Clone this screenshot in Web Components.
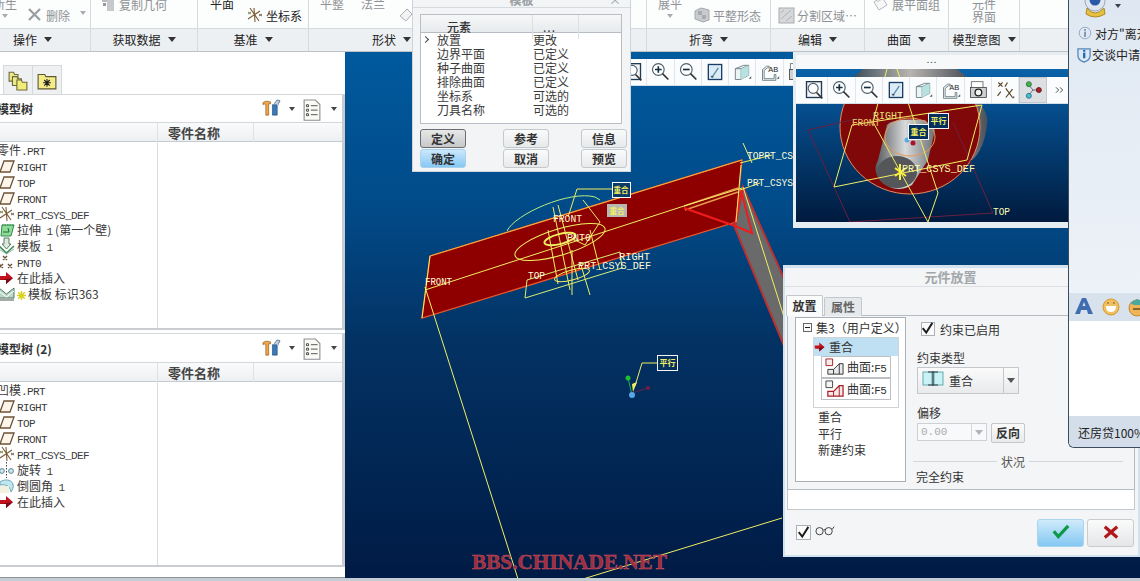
<!DOCTYPE html>
<html lang="zh">
<head>
<meta charset="utf-8">
<title>Pro/E</title>
<style>
  html, body { margin: 0; padding: 0; width: 1140px; height: 581px; overflow: hidden; background: #c9ced4; }
  body { font: 12px "Noto Sans CJK SC", "Liberation Sans", sans-serif; color: #333; }
</style>
</head>
<body>
<cad-app>
  <ribbon-bar slot="ribbon">
    <ribbon-group label="操作" w="91" pad="13">
      <rb-item stack caret muted style="margin:-3px 0 0 -7px">新生</rb-item>
      <rb-item icon="del" muted style="margin:7px 0 0 10px">删除</rb-item>
      <rb-item caret-side muted style="margin:7px 0 0 0"></rb-item>
    </ribbon-group>
    <ribbon-group label="获取数据" w="107">
      <rb-item icon="copygeom" muted style="margin:-4px 0 0 9px">复制几何</rb-item>
    </ribbon-group>
    <ribbon-group label="基准" w="111">
      <rb-item style="margin:-3px 0 0 12px">平面</rb-item>
      <rb-item icon="csys" style="margin:7px 0 0 13px">坐标系</rb-item>
    </ribbon-group>
    <ribbon-group label="形状" w="338" pad="63">
      <rb-item muted style="margin:-3px 0 0 11px">平整</rb-item>
      <rb-item muted style="margin:-3px 0 0 17px">法兰</rb-item>
      <rb-item icon="wedge" muted style="margin:7px 0 0 13px"></rb-item>
    </ribbon-group>
    <ribbon-group label="折弯" w="124">
      <rb-item stack caret muted style="margin:-3px 0 0 11px">展平</rb-item>
      <rb-item icon="flat" muted style="margin:7px 0 0 12px">平整形态</rb-item>
    </ribbon-group>
    <ribbon-group label="编辑" w="94">
      <rb-item icon="split" muted style="margin:7px 0 0 7px">分割区域…</rb-item>
    </ribbon-group>
    <ribbon-group label="曲面" w="84">
      <rb-item icon="unfold" muted style="margin:-4px 0 0 8px">展平面组</rb-item>
    </ribbon-group>
    <ribbon-group label="模型意图" w="71">
      <rb-item stack muted style="margin:-3px 0 0 23px">元件<br>界面</rb-item>
    </ribbon-group>
    <ribbon-group w="120"></ribbon-group>
  </ribbon-bar>

  <model-sidebar slot="side">
    <tree-panel label="模型树" head="28" h="236">
      <tree-row root>零件<span>.PRT</span></tree-row>
      <tree-row icon="plane"><span>RIGHT</span></tree-row>
      <tree-row icon="plane"><span>TOP</span></tree-row>
      <tree-row icon="plane"><span>FRONT</span></tree-row>
      <tree-row icon="csys"><span>PRT_CSYS_DEF</span></tree-row>
      <tree-row icon="extrude">拉伸  <span>1</span> (第一个壁)</tree-row>
      <tree-row icon="template">模板  <span>1</span></tree-row>
      <tree-row icon="pnt"><span>PNT0</span></tree-row>
      <tree-row icon="arrow">在此插入</tree-row>
      <tree-row icon="template2"><cad-icon name="star" size="9"></cad-icon>模板 标识363</tree-row>
    </tree-panel>
    <tree-panel label="模型树 (2)" head="29" h="234">
      <tree-row root>凹模<span>.PRT</span></tree-row>
      <tree-row icon="plane"><span>RIGHT</span></tree-row>
      <tree-row icon="plane"><span>TOP</span></tree-row>
      <tree-row icon="plane"><span>FRONT</span></tree-row>
      <tree-row icon="csys"><span>PRT_CSYS_DEF</span></tree-row>
      <tree-row icon="revolve">旋转  <span>1</span></tree-row>
      <tree-row icon="round">倒圆角  <span>1</span></tree-row>
      <tree-row icon="arrow">在此插入</tree-row>
    </tree-panel>
  </model-sidebar>

  <cad-viewport slot="view">
    <view-toolbar style="left:286px;top:7px;width:164px" items="fit,zoomin,zoomout,repaint,box,ab,camera" first="-11"></view-toolbar>
  </cad-viewport>

  <template-dialog slot="win"></template-dialog>
  <mini-view slot="win"></mini-view>
  <placement-dialog slot="win"></placement-dialog>
  <chat-window slot="win"></chat-window>
</cad-app>

<script>
const ICONS = {
  del: '<path d="M2 2L13 13M13 2L2 13" stroke="#9a9ea2" stroke-width="2.2" fill="none"/>',
  copygeom: '<rect x="2" y="1" width="6" height="5" fill="#b8bcc0"/><rect x="7" y="4" width="7" height="11" fill="#c6c9cc"/><rect x="3" y="7" width="3" height="3" fill="#999"/>',
  csys: '<path d="M3 1L12 14M1 12L13 4M7 1L8 15" stroke="#7a5a34" stroke-width="1.1" fill="none"/><path d="M12 7l3 2M15 7l-3 2" stroke="#7a6a50" stroke-width="1"/><path d="M1 5l3 2M4 5L1 7" stroke="#8a8a50"/>',
  wedge: '<path d="M2 9L9 2L14 7L8 14Z" fill="#f4f4f4" stroke="#aab0b6"/><path d="M2 9L8 14" stroke="#c4c8cc"/>',
  flat: '<path d="M1 4L7 1L15 3V13L9 15L1 12Z" fill="#c9cccf" stroke="#a4a8ac"/><path d="M4 4h4v4H4zM8 8h4v4H8z" fill="#a8acb0"/>',
  split: '<rect x="1" y="1" width="15" height="15" fill="#d6d8da" stroke="#a8acb0"/><path d="M3 12L13 3M3 6l3-3M8 14l6-5" stroke="#aeb2b6"/>',
  unfold: '<path d="M1 6L9 1L14 9L6 14Z" fill="#f8f8f8" stroke="#b4b8bc"/><path d="M4 6L9 3" stroke="#c4c8cc"/>',
  plane: '<path d="M1 14L5 3H15L11 14Z" fill="#fdf5ea" stroke="#6e5236" stroke-width="1.3"/>',
  extrude: '<path d="M3 3H15L12 14H2Z" fill="#8fdc9a" stroke="#2f8a46"/><path d="M3 3H15" stroke="#2f8a46" stroke-dasharray="1.5 1"/><path d="M4 10H10L9 6" stroke="#1f6a36" fill="none"/>',
  template: '<path d="M5 0V6H3L7.5 11L12 6H10V0Z" fill="#dfe8df" stroke="#5a7a62"/><path d="M0 8L7.5 15L15 8" fill="none" stroke="#3c8a56" stroke-width="1.6"/><path d="M0 11L7.5 16L15 11" fill="none" stroke="#8fb89c"/>',
  pnt: '<path d="M4 2l4 4M8 2L4 6M0 10l4 4M4 10L0 14M9 10l4 4M13 10l-4 4" stroke="#6b5236" stroke-width="1.4"/>',
  arrow: '<path d="M1 6H7V2L14 8L7 14V10H1Z" fill="#c4101c"/><path d="M1 10H7V14L14 8" fill="#7c0a12"/>',
  template2: '<path d="M0 2L7.5 8L15 2V12H0Z" fill="#b9d6c6" stroke="#4e7a60"/><path d="M0 12H15V15H0Z" fill="#a4aaa6"/><path d="M0 5L7.5 11L15 5" stroke="#fff" fill="none"/>',
  star: '<path d="M4.5 0V9M0 4.5H9M1.2 1.2L7.8 7.8M7.8 1.2L1.2 7.8" stroke="#d8d21c" stroke-width="1.4"/>',
  revolve: '<path d="M7.5 0V16" stroke="#444" stroke-dasharray="1.5 1.5"/><circle cx="3" cy="9" r="2.4" fill="#cfe6ee" stroke="#5a8898"/><circle cx="12" cy="9" r="2.4" fill="#cfe6ee" stroke="#5a8898"/>',
  round: '<path d="M1 4C5 1 12 1 14 6C15 10 13 12 12 14C11 8 7 6 1 7Z" fill="#bfe6ee" stroke="#6aa8b8"/><path d="M0 8H10V15H0Z" fill="#f2f0de"/>',
  tools: '<path d="M1 4C4 1 8 3 9 3V5H7V17H4V6C3 5 2 5 1 6Z" fill="#f0a648" stroke="#8a5a1e" stroke-width=".7"/><path d="M11 6H16V17H11Z" fill="#3b78b8" stroke="#23507e" stroke-width=".7"/><path d="M13 5L16 1L19 2L17 5L18 6" fill="#c7d6e4" stroke="#5a7088"/>',
  list: '<path d="M1 0H11L15 4V18H1Z" fill="#fbfbf6" stroke="#8b8f93"/><circle cx="4" cy="5" r="1" fill="none" stroke="#555"/><circle cx="4" cy="9" r="1" fill="none" stroke="#555"/><circle cx="4" cy="13" r="1" fill="none" stroke="#555"/><path d="M7 5H13M7 9H13M7 13H13" stroke="#777"/>',
  folders: '<path d="M1 2H5L6 4H9V10H1Z" fill="#eee88c" stroke="#6c6a3a"/><path d="M4 6H8L9 8H12V14H4Z" fill="#eee88c" stroke="#6c6a3a"/><path d="M8 9H12L13 11H17V18H8Z" fill="#f2ec78" stroke="#6c6a3a"/>',
  starfolder: '<path d="M1 4H7L8 6H17V17H1Z" fill="#f3ec88" stroke="#5c5a30"/><path d="M9 8V15M5.5 11.5H12.5M6.5 9L11.5 14M11.5 9L6.5 14" stroke="#222" stroke-width="1"/>',
  fit: '<rect x="3" y="2" width="18" height="19" fill="#f4f6f8" stroke="#213b54" stroke-width="1.6"/><circle cx="11" cy="10" r="6" fill="#fff" stroke="#526270" stroke-width="1.4"/><path d="M15 15L22 22" stroke="#333" stroke-width="2"/>',
  zoomin: '<circle cx="10" cy="9" r="7" fill="#fff" stroke="#50606c" stroke-width="1.4"/><path d="M6 9H14M10 5V13" stroke="#142e3e" stroke-width="2"/><path d="M15 14L22 21" stroke="#333" stroke-width="2"/>',
  zoomout: '<circle cx="10" cy="9" r="7" fill="#fff" stroke="#50606c" stroke-width="1.4"/><path d="M6 9H14" stroke="#142e3e" stroke-width="2"/><path d="M15 14L22 21" stroke="#333" stroke-width="2"/>',
  repaint: '<rect x="4" y="3" width="16" height="18" fill="#dcecf6" stroke="#1c3e66" stroke-width="1.6"/><path d="M8 19L16 7" stroke="#5a8cb0" stroke-width="1.6"/><path d="M7 17l3 1" stroke="#222"/>',
  box: '<path d="M4 8L14 4H20V16L10 21H4Z" fill="#eaf5f5" stroke="#63727a"/><path d="M4 8H11V21M11 8L20 4" fill="none" stroke="#63727a"/><path d="M11 8L20 4V16L11 21Z" fill="#b8e2e2"/><path d="M20 20l3 0l0 -3z" fill="#555"/>',
  ab: '<path d="M3 9L8 5H11V7H9L5 10V20H17V15H19V22H3Z" fill="#f0f6f6" stroke="#60747c"/><text x="10" y="12" font-family="Liberation Sans" font-size="9" fill="#222">AB</text><path d="M20 20l3 0l0 -3z" fill="#555"/>',
  camera: '<rect x="4" y="2" width="14" height="8" fill="#fff" stroke="#666"/><rect x="3" y="9" width="19" height="12" fill="#cfd2d4" stroke="#444"/><circle cx="12.5" cy="15" r="4" fill="#f4f4f4" stroke="#222" stroke-width="1.6"/>',
  datumx: '<path d="M4 3l5 5M9 3L4 8M15 3L12 8M3 19L7 14M13 10L21 21M21 11L13 21" stroke="#5a4426" stroke-width="1.4"/><path d="M20 22l3 0l0 -3z" fill="#555"/>',
  nodes: '<path d="M7 6L12 12L7 18M12 12H19" stroke="#556" fill="none"/><circle cx="7" cy="5" r="3" fill="#3fb54a" stroke="#2a6a34"/><circle cx="7" cy="19" r="3" fill="#47bfd0" stroke="#2a6a7a"/><circle cx="19" cy="12" r="3" fill="#b02028" stroke="#5a1014"/>',
  more: '<path d="M6 8l4 4l-4 4M12 8l4 4l-4 4" fill="none" stroke="#333" stroke-width="1.3"/>',
  coincide: '<rect x="0" y="1" width="9" height="13" fill="#c8f2f6" stroke="#6aa"/><rect x="11" y="1" width="9" height="13" fill="#c8f2f6" stroke="#6aa"/><path d="M10 0V15M5 1H15M5 14H15" stroke="#2c3e44" stroke-width="1.2"/>',
  blockred: '<path d="M1 1H8V8H1Z" fill="#f6eaea" stroke="#a82026"/><path d="M3 17V12H9L15 6H19V17Z" fill="#e8eaec" stroke="#333"/><path d="M15 6V17M9 12V17" stroke="#333"/>',
  blockgrey: '<path d="M1 1H8V8H1Z" fill="#f4f4f4" stroke="#444"/><path d="M3 17V12H9L15 6H19V17Z" fill="#f6e8e8" stroke="#a82026" stroke-width="1.3"/><path d="M15 6V17M9 12V17" stroke="#a82026"/>',
  glasses: '<circle cx="5" cy="9" r="4" fill="none" stroke="#333"/><circle cx="15" cy="9" r="4" fill="none" stroke="#333"/><path d="M9 8Q10 6 11 8M19 7L21 4" fill="none" stroke="#333"/>',
  tick: '<path d="M2 8L7 14L18 2" fill="none" stroke="#0d9a48" stroke-width="3.6"/>',
  cross: '<path d="M2 2L16 14M16 2L2 14" fill="none" stroke="#b0191c" stroke-width="3.6"/>',
  check: '<path d="M2 7L6 12L13 1" fill="none" stroke="#1c1c1c" stroke-width="2.2"/>',
  minus: '<rect x=".5" y=".5" width="8" height="8" fill="#fafafa" stroke="#666"/><path d="M2 4.5H7" stroke="#222"/>',
  cam: '<path d="M4 14Q12 24 21 14L22 20Q12 26 3 20Z" fill="#e8c040" stroke="#a88a20"/><circle cx="12" cy="7" r="10" fill="#dfe6ee" stroke="#9aa8b8"/><circle cx="12" cy="6" r="5.5" fill="#2a5aa8"/><circle cx="10" cy="4" r="1.6" fill="#bcd"/>',
  info: '<circle cx="8" cy="8" r="6.6" fill="#dfe8f4" stroke="#8ea4c0"/><rect x="7" y="6.5" width="2" height="6" fill="#7a8ea8"/><rect x="7" y="3.5" width="2" height="2" fill="#7a8ea8"/>',
  shield: '<path d="M1 2H14V9Q14 14 7.5 16Q1 14 1 9Z" fill="#dbe8f6" stroke="#5a88b8" stroke-width="1.4"/><rect x="6.5" y="6" width="2.4" height="6" fill="#1c64b0"/><rect x="6.5" y="3" width="2.4" height="2" fill="#1c64b0"/>',
  bold_a: '<path d="M1 17H6L7 13H13L14 17H19L12 1H8ZM8.5 9L10 5L11.5 9Z" fill="#3f6db0" fill-rule="evenodd"/>',
  smile: '<circle cx="9" cy="9" r="8" fill="#f0c060" stroke="#d89a30"/><path d="M4 8H14Q14 14 9 14Q4 14 4 8Z" fill="#fff"/><path d="M5 5h2M11 5h2" stroke="#7a5a20"/>',
  smile2: '<circle cx="9" cy="10" r="8" fill="#eeb458" stroke="#c88a28"/><path d="M2 5L9 1L16 4L12 7L6 7Z" fill="#4aa8a0"/><path d="M5 11H13" stroke="#6a4a18" stroke-width="1.4"/>'
};

// small helper: host with a shadow root holding the given html
function shadow(el, html) {
  el.attachShadow({ mode: 'open' });
  el.shadowRoot.innerHTML = html;
}

class CadIcon extends HTMLElement {
  connectedCallback() {
    const name = this.getAttribute('name');
    const size = this.getAttribute('size') || 16;
    const vb = { fit: 24, zoomin: 24, zoomout: 24, repaint: 24, box: 24, ab: 24, camera: 24, datumx: 24, nodes: 24, more: 24, cam: 24,
      star: 9, minus: 9, tools: 20, list: 16, folders: 18, starfolder: 18, blockred: 20, blockgrey: 20, coincide: 20, tick: 20, cross: 18, glasses: 22, smile: 18, smile2: 18, bold_a: 20 }[name] || 16;
    shadow(this, `<style>:host{display:inline-flex;flex:none}svg{display:block;overflow:visible}</style>
      <svg width="${this.getAttribute('w') || size}" height="${size}" viewBox="0 0 ${vb} ${vb}">${ICONS[name] || ''}</svg>`);
  }
}
customElements.define('cad-icon', CadIcon);

class CadApp extends HTMLElement {
  connectedCallback() {
    shadow(this, `<style>
      :host{display:grid;grid-template-columns:345px 1fr;grid-template-rows:52px 526px;width:1140px;height:581px;position:relative;overflow:hidden;background:#c4ccd4}
      .r{grid-column:1/3;display:block}
    </style>
    <slot class="r" name="ribbon"></slot><slot name="side"></slot><slot name="view"></slot><slot name="win"></slot>`);
  }
}
customElements.define('cad-app', CadApp);

class RibbonBar extends HTMLElement {
  connectedCallback() {
    shadow(this, `<style>:host{display:flex;height:52px;overflow:hidden;background:#fcfdfd;box-sizing:border-box;border-bottom:1px solid #bcc2c8}</style><slot></slot>`);
  }
}
customElements.define('ribbon-bar', RibbonBar);

class RibbonGroup extends HTMLElement {
  connectedCallback() {
    const label = this.getAttribute('label');
    const pad = this.getAttribute('pad');
    shadow(this, `<style>
      :host{display:flex;flex-direction:column;flex:none;width:${this.getAttribute('w')}px;box-sizing:border-box;border-right:1px solid #d6dade}
      .top{display:flex;height:29px;overflow:hidden;align-items:flex-start;border-bottom:1px solid #d6dade;box-sizing:border-box}
      .lab{flex:1;background:#edf0f3;display:flex;align-items:center;justify-content:${pad ? 'flex-start' : 'center'};gap:7px;padding:0 0 1px ${pad || 0}px;font-size:12px;color:#222;box-sizing:border-box}
      i{width:0;height:0;border:4px solid transparent;border-top:5px solid #333;border-bottom:0}
    </style><div class="top"><slot></slot></div>
    <div class="lab">${label ? `<span>${label}</span><i></i>` : ''}</div>`);
  }
}
customElements.define('ribbon-group', RibbonGroup);

class RbItem extends HTMLElement {
  connectedCallback() {
    const muted = this.hasAttribute('muted');
    const stack = this.hasAttribute('stack');
    const icon = this.getAttribute('icon');
    shadow(this, `<style>
      :host{display:inline-flex;flex:none;align-items:center;gap:3px;font-size:12px;line-height:13px;white-space:nowrap;color:${muted ? '#8e9296' : '#222'};${stack ? 'flex-direction:column;text-align:center;gap:4px' : ''}}
      i{width:0;height:0;border:3.5px solid transparent;border-top:4px solid #a8acb0;border-bottom:0}
      .side{margin:4px 0 0 7px}
    </style>${icon ? `<cad-icon name="${icon}"></cad-icon>` : ''}<span><slot></slot></span>${this.hasAttribute('caret') ? '<i></i>' : ''}${this.hasAttribute('caret-side') ? '<i class="side"></i>' : ''}`);
  }
}
customElements.define('rb-item', RbItem);

class ModelSidebar extends HTMLElement {
  connectedCallback() {
    shadow(this, `<style>
      :host{display:flex;flex-direction:column;height:526px;background:#fff;gap:3px;overflow:hidden;box-sizing:border-box;border-bottom:1px solid #8c949c}
      .tabs{display:flex;height:42px;box-sizing:border-box;padding:13px 0 0 3px}
      .tab{width:30px;height:29px;box-sizing:border-box;background:#eef0f2;border:1px solid #d6d9dc;border-bottom:0;display:flex;align-items:center;justify-content:center;margin-right:-1px}
    </style>
    <div class="tabs" style="margin-bottom:-3px">
      <div class="tab"><cad-icon name="folders" size="20"></cad-icon></div>
      <div class="tab"><cad-icon name="starfolder" size="20"></cad-icon></div>
    </div><slot></slot>`);
  }
}
customElements.define('model-sidebar', ModelSidebar);

class TreePanel extends HTMLElement {
  connectedCallback() {
    shadow(this, `<style>
      :host{display:flex;flex-direction:column;height:${this.getAttribute('h')}px;flex:none;box-sizing:border-box;border-top:1px solid #d4d8dc;border-right:3px solid #c9cdd2;border-bottom:2px solid #c9cdd2;background:#fff;position:relative;width:345px}
      .head{height:${this.getAttribute('head') - 1}px;display:flex;align-items:center;padding-right:4px;box-sizing:border-box;flex:none}
      .title{font-weight:700;font-size:12px;color:#333;margin-left:-3px;flex:1;white-space:nowrap}
      i{width:0;height:0;border:3.5px solid transparent;border-top:4px solid #444;border-bottom:0;margin:0 8px}
      i.last{margin:0 1px 0 10px}
      .cols{height:20px;flex:none;box-sizing:border-box;display:grid;grid-template-columns:158px 96px 1fr;background:linear-gradient(#fafbfb,#edf0f2);border-top:1px solid #d4d8dc;border-bottom:1px solid #c4cad0;font-weight:700;font-size:13px;color:#444;line-height:19px}
      .cols div{border-right:1px solid #dfe2e5;padding-left:10px;white-space:nowrap}
      .cols div:last-child{border:0}
      .body{flex:1;display:grid;grid-template-columns:158px 1fr;min-height:0}
      .c1{border-right:1px solid #d8dbde;overflow:hidden}
    </style>
    <div class="head"><span class="title">${this.getAttribute('label')}</span>
      <cad-icon name="tools" size="19"></cad-icon><i></i><cad-icon name="list" size="18"></cad-icon><i class="last"></i></div>
    <div class="cols"><div></div><div>零件名称</div><div></div></div>
    <div class="body"><div class="c1"><slot></slot></div><div></div></div>`);
  }
}
customElements.define('tree-panel', TreePanel);

class TreeRow extends HTMLElement {
  connectedCallback() {
    const icon = this.getAttribute('icon');
    shadow(this, `<style>
      :host{display:flex;align-items:center;height:16px;gap:2px;font-size:12px;line-height:16px;color:#3a3a3a;white-space:pre;${this.hasAttribute('root') ? 'margin-left:-3px' : 'margin-left:-1px'}}
      ::slotted(span){font:11px/1 "Liberation Mono",monospace;letter-spacing:-.6px}
      ::slotted(cad-icon){margin-right:2px;vertical-align:-1px}
    </style>${icon ? `<cad-icon name="${icon}"></cad-icon>` : ''}<div><slot></slot></div>`);
  }
}
customElements.define('tree-row', TreeRow);

class ViewToolbar extends HTMLElement {
  connectedCallback() {
    const items = this.getAttribute('items').split(',');
    shadow(this, `<style>
      :host{position:absolute;display:flex;height:27px;background:#fafcfd;box-sizing:border-box;border-bottom:1px solid #cfe0ea;overflow:hidden}
      div{width:27.3px;flex:none;box-sizing:border-box;border-right:1px solid #e2e6ea;display:flex;align-items:center;justify-content:center}
      .on{background:#dde0e3;border:1px solid #c4c8cc}
      .first{margin-left:${this.getAttribute('first') || 0}px}
    </style>${items.map((n, i) => `<div class="${n === 'nodes' ? 'on' : ''} ${i === 0 ? 'first' : ''}"><cad-icon name="${n}" size="${n === 'more' ? 16 : 20}"></cad-icon></div>`).join('')}`);
  }
}
customElements.define('view-toolbar', ViewToolbar);

const Y = '#f2ee62';
class CadViewport extends HTMLElement {
  connectedCallback() {
    const t = (x, y, w, s) => `<text x="${x}" y="${y}" textLength="${w}" lengthAdjust="spacingAndGlyphs" font-family="Liberation Mono" font-size="11" fill="#fdfcd8">${s}</text>`;
    shadow(this, `<style>
      :host{display:block;position:relative;height:526px;overflow:hidden;background:linear-gradient(#005a9e 0,#014a88 30%,#033263 55%,#001b45 100%)}
      svg{display:block;position:absolute;left:0;top:0}
    </style>
    <svg width="795" height="526" viewBox="345 52 795 526">
      <polygon points="743,187 790,292 790,360 735,228" fill="#6a6a6a" stroke="#b83232" stroke-width="2"/>
      <polygon points="430,256 742,160 736,222 422,318" fill="#8e0000" stroke="#e8562a" stroke-width="1.3"/>
      <path d="M430,256L742,160" stroke="#f5b040" stroke-width="1"/>
      <path d="M684,206L738,188M685,210L738,192" stroke="#e89a50" stroke-width="1.4"/>
      <path d="M684,208L735,226L752,233L741,190L735,226" fill="none" stroke="#ee1c1c" stroke-width="2"/>
      <g fill="none" stroke="${Y}" stroke-width="1">
        <path d="M430,256L422,318"/>
        <path d="M425,287L518,579"/>
        <path d="M583,579L782,518"/>
        <path d="M743,187L785,320"/>
        <path d="M425,290L684,206L742,188"/>
        <path d="M743,143L752,163M740,163L772,155M740,190L760,183M741,165L736,222"/>
        <ellipse cx="560" cy="242" rx="47" ry="13" transform="rotate(-17 560 242)"/>
        <ellipse cx="560" cy="239" rx="16" ry="5" transform="rotate(-14 560 239)" stroke-width="2"/>
        <ellipse cx="572" cy="275" rx="18" ry="5" transform="rotate(-15 572 275)"/>
        <path d="M553,207L570,290M558,205L578,280M548,230L558,284M590,230L600,270M568,217L577,189H612"/>
        <path d="M525,298L527,280L620,252L622,268L525,298" stroke="#d8ee72"/>
        <path d="M572,250L572,295M580,262L590,295"/>
        <path d="M583,200L600,222L585,245L575,240"/>
      </g>
      <path d="M507,231C515,214 570,190 595,197L600,200" fill="none" stroke="#b8ee80"/>
      ${t(425, 285, 27, 'FRONT')}${t(528, 279, 17, 'TOP')}${t(578, 269, 73, 'PRT_CSYS_DEF')}${t(619, 260, 31, 'RIGHT')}
      ${t(553, 222, 29, 'FRONT')}${t(567, 241, 24, 'PNT0')}${t(747, 159, 46, 'TOPRT_CS')}${t(747, 186, 46, 'PRT_CSYS')}
      <rect x="612.5" y="182.5" width="18" height="15" fill="#0a3a66" stroke="#fff"/>
      <text x="621" y="193" text-anchor="middle" font-size="7.5" font-weight="700" fill="${Y}" font-family="Noto Sans CJK SC">重合</text>
      <rect x="607" y="204" width="20" height="13" fill="#b8b8b2"/>
      <text x="617" y="214" text-anchor="middle" font-size="7.5" font-weight="700" fill="${Y}" font-family="Noto Sans CJK SC">重合</text>
      <path d="M657,363H642L635,386" fill="none" stroke="${Y}"/>
      <path d="M637,382L633,392L632,384Z" fill="${Y}"/>
      <rect x="657.5" y="355.5" width="20" height="15" fill="#03305e" stroke="#f4f4f4"/>
      <text x="667.5" y="366" text-anchor="middle" font-size="8" font-weight="700" fill="${Y}" font-family="Noto Sans CJK SC">平行</text>
      <path d="M632,395L628,378" stroke="#2ca84a"/><path d="M632,393L648,388" stroke="#6a2048"/>
      <circle cx="628" cy="378" r="2.5" fill="#22c030"/><circle cx="648" cy="388" r="2" fill="#7a1c40"/><circle cx="632" cy="395" r="3" fill="#58a8e8"/>
      <text x="472" y="569" textLength="195" lengthAdjust="spacingAndGlyphs" font-family="Liberation Serif" font-weight="700" font-size="20" fill="#a02c3e" stroke="#c85a66" stroke-width=".4">BBS.CHINADE.NET</text>
    </svg><slot></slot>`);
  }
}
customElements.define('cad-viewport', CadViewport);

class TemplateDialog extends HTMLElement {
  connectedCallback() {
    const rows = [['放置', '更改'], ['边界平面', '已定义'], ['种子曲面', '已定义'], ['排除曲面', '已定义'], ['坐标系', '可选的'], ['刀具名称', '可选的']];
    shadow(this, `<style>
      :host{position:absolute;left:412px;top:-10px;width:219px;height:182px;box-sizing:border-box;background:#f2f4f5;border:1px solid #cdd5dc;font-size:12px;color:#333;display:flex;flex-direction:column}
      .tt{height:17px;flex:none;box-sizing:border-box;border-bottom:1px solid #d4dade;position:relative;text-align:center;color:#9a9ea2;line-height:18px;font-weight:700}
      .tt span{position:absolute;right:9px;top:0;font-weight:400}
      .list{margin:6px 8px 0 7px;height:110px;box-sizing:border-box;background:#fff;border:1px solid #b8bec4;flex:none}
      .h{display:grid;grid-template-columns:112px 46px 1fr;height:18px;background:linear-gradient(#f6f7f8,#e7eaed);border-bottom:1px solid #b6bcc2;box-sizing:border-box;line-height:24px}
      .h div{border-right:1px solid #dcdfe2}
      .h div:first-child{padding-left:26px;font-weight:500}
      .h div:nth-child(2){padding-left:10px;letter-spacing:1px}
      .h div:last-child{border:0}
      .row{display:grid;grid-template-columns:16px 96px 1fr;height:14px;line-height:14px;color:#3a3a3a}
      .mark{width:5px;height:5px;border:solid #444;border-width:1px 1px 0 0;transform:rotate(45deg);margin:4px 0 0 2px;box-sizing:border-box}
      .btns{display:grid;grid-template-columns:83px 78px 46px;grid-auto-rows:19px;gap:1px 0;margin:5px 0 0 7px}
      button{all:unset;box-sizing:border-box;width:46px;text-align:center;font-weight:700;font-size:12px;line-height:17px;border:1px solid #c4c9ce;border-radius:3px;background:linear-gradient(#fafbfb,#e7e9eb);color:#333}
      .down{background:linear-gradient(#e8e8e8,#c6c8ca);border-color:#6a6e72}
      .blue{background:linear-gradient(#cbe8fb,#86c8f4);border-color:#a8d2ee}
    </style>
    <div class="tt">模板<span>×</span></div>
    <div class="list"><div class="h"><div>元素</div><div>...</div><div></div></div>
      ${rows.map((r, i) => `<div class="row"><span>${i ? '' : '<div class="mark"></div>'}</span><span>${r[0]}</span><span>${r[1]}</span></div>`).join('')}
    </div>
    <div class="btns"><button class="down">定义</button><button>参考</button><button>信息</button><button class="blue">确定</button><button>取消</button><button>预览</button></div>`);
  }
}
customElements.define('template-dialog', TemplateDialog);

class MiniView extends HTMLElement {
  connectedCallback() {
    const t = (x, y, w, s, c) => `<text x="${x}" y="${y}" textLength="${w}" lengthAdjust="spacingAndGlyphs" font-family="Liberation Mono" font-size="11" fill="${c || '#fdfbb0'}">${s}</text>`;
    shadow(this, `<style>
      :host{position:absolute;left:793px;top:52px;width:275px;height:176px;box-sizing:border-box;background:#e6edf2;padding:3px 0 6px 3px;display:flex;flex-direction:column}
      .tt{height:14px;flex:none;background:#f6f8f9;text-align:center;font-size:9px;line-height:10px;color:#444;letter-spacing:1px}
      .cv{position:relative;flex:1;overflow:hidden;background:linear-gradient(#0a62a8 0,#054a88 30%,#02305e 70%,#001a3e 100%)}
      svg{display:block;position:absolute;left:0;top:0}
    </style>
    <div class="tt">...</div>
    <div class="cv">
      <svg width="272" height="153" viewBox="796 69 272 153">
        <defs>
          <linearGradient id="cyl" x1="0" x2="1" y1="0" y2="0"><stop offset="0" stop-color="#55585c"/><stop offset=".5" stop-color="#d8dadc"/><stop offset="1" stop-color="#6c7074"/></linearGradient>
          <linearGradient id="hood" x1="0" x2="1" y1="0" y2="0"><stop offset="0" stop-color="#3a4a58"/><stop offset=".5" stop-color="#b8b4ae"/><stop offset="1" stop-color="#4a5058"/></linearGradient>
        </defs>
        <path d="M900,95L970,95Q990,110 987,125Q984,150 972,160L900,130Z" fill="url(#hood)"/>
        <ellipse cx="910" cy="127" rx="70" ry="67" fill="#800808" stroke="#e88a60"/>
        <path d="M863,69H957L968,78H852Z" fill="url(#hood)"/>
        <path d="M808,130L850,222M953,122L993,213M808,130L860,118M850,222L993,213" fill="none" stroke="#6a2040"/>
        <path d="M887,125Q893,118 925,120L935,130L928,160L912,185Q895,195 880,180Q872,170 878,160Z" fill="url(#cyl)"/>
        <ellipse cx="897" cy="172" rx="20" ry="16" fill="#54565a"/>
        <ellipse cx="910" cy="137" rx="25" ry="19" fill="none" stroke="#e89a50"/>
        <g fill="none" stroke="${Y}" stroke-width="1">
          <path d="M834,187L852,125L982,105L967,160L834,187"/>
          <path d="M887,69L873,122L928,222M897,69L938,193L928,222"/>
        </g>
        <path d="M895,168l11,8M906,168l-11,8M900,164v16" stroke="#f8f040" stroke-width="2"/>
        ${t(873, 119, 30, 'RIGHT', '#e8e07a')}${t(852, 126, 28, 'FRONT', '#f0c870')}${t(902, 172, 73, 'PRT_CSYS_DEF')}${t(993, 215, 17, 'TOP')}
        <circle cx="913" cy="143" r="2.5" fill="#a8142c"/><circle cx="907" cy="140" r="2.5" fill="#58a8e8"/>
        <rect x="928.5" y="113.5" width="20" height="15" fill="#03305e" stroke="#f4f4f4"/>
        <text x="938.5" y="124" text-anchor="middle" font-size="8" font-weight="700" fill="${Y}" font-family="Noto Sans CJK SC">平行</text>
        <rect x="908.5" y="124.5" width="20" height="15" fill="#03305e" stroke="#f4f4f4"/>
        <text x="918.5" y="135" text-anchor="middle" font-size="8" font-weight="700" fill="${Y}" font-family="Noto Sans CJK SC">重合</text>
      </svg>
      <view-toolbar style="left:0;top:8px;width:272px" items="fit,zoomin,zoomout,repaint,box,ab,camera,datumx,nodes,more" first="5"></view-toolbar>
    </div>`);
  }
}
customElements.define('mini-view', MiniView);

class PlacementDialog extends HTMLElement {
  connectedCallback() {
    shadow(this, `<style>
      :host{position:absolute;left:783px;top:265px;width:357px;height:292px;box-sizing:border-box;background:#f3f5f6;border:2px solid #d4e2ee;border-top-width:3px;font-size:12px;color:#333;display:flex;flex-direction:column}
      .tt{height:19px;flex:none;box-sizing:border-box;border-bottom:1px solid #dde0e3;text-align:center;color:#a2a6aa;font-weight:700;font-size:13px;line-height:18px;padding-right:22px}
      .tabs{display:flex;height:28px;flex:none;align-items:flex-end;padding-left:1px;box-sizing:border-box}
      .tab{height:21px;width:37px;box-sizing:border-box;border:1px solid #c4c8cc;border-bottom:0;text-align:center;font-weight:700;line-height:19px;background:#fafbfb;position:relative;top:1px;border-radius:2px 2px 0 0}
      .tab.off{width:38px;height:19px;background:#e6e9ec;color:#666;line-height:17px;margin-left:1px}
      .panel{height:175px;flex:none;box-sizing:border-box;border:1px solid #b6bcc2;margin:0 4px 0 2px;display:flex;width:348px}
      .tree{width:111px;height:165px;box-sizing:border-box;border:1px solid #aab0b6;background:#fff;margin:1px 0 0 7px;flex:none;line-height:16px}
      .t1{display:flex;align-items:center;gap:4px;height:19px;padding-left:7px;white-space:nowrap}
      .sel{width:86px;height:71px;box-sizing:border-box;border:1px solid #cfd3d6;margin-left:17px}
      .sel .hd{height:18px;background:#bfe0f2;display:flex;align-items:center;gap:3px;line-height:16px}
      .ref{margin:0 7px;height:22px;box-sizing:border-box;border:1px solid #bcc0c4;display:flex;align-items:center;gap:3px;padding-left:3px;white-space:nowrap}
      .ref span{font:11px/1 "Liberation Mono",monospace;letter-spacing:-.6px}
      .opts{padding:1px 0 0 22px;line-height:16.5px}
      .side{flex:1;padding-left:7px;min-width:0}
      .box{width:14px;height:14px;box-sizing:border-box;border:1px solid #aab0b6;background:#fbfbfb;display:flex;align-items:center;justify-content:center;flex:none}
      .chk{display:flex;align-items:center;gap:5px;margin:6px 0 0 8px;height:14px}
      .lab{margin:14px 0 0 4px;line-height:16px}
      .dd{width:102px;height:27px;box-sizing:border-box;margin:1px 0 0 4px;border:1px solid #c4c8cc;background:linear-gradient(#fbfbfb,#e8eaec);display:flex;align-items:center;padding-left:5px;gap:6px}
      .dd em{margin-left:auto;font-style:normal;width:14px;height:100%;border-left:1px solid #c4c8cc;display:flex;align-items:center;justify-content:center}
      i{width:0;height:0;border:4px solid transparent;border-top:5px solid #555;border-bottom:0}
      .num{display:flex;gap:4px;margin:2px 0 0 4px;align-items:flex-start}
      .inp{width:70px;height:18px;box-sizing:border-box;border:1px solid #cdd1d4;background:#f8f9fa;color:#a8acb0;font:11px "Liberation Mono",monospace;line-height:16px;padding-left:3px;display:flex}
      .inp em{margin-left:auto;width:14px;border-left:1px solid #d6d9dc;display:flex;align-items:center;justify-content:center}
      .inp i{border-top-color:#b0b4b8}
      .rv{width:34px;height:20px;box-sizing:border-box;border:1px solid #c4c8cc;border-radius:2px;background:linear-gradient(#fafafa,#e8eaec);text-align:center;font-weight:700;line-height:18px}
      .st{display:flex;align-items:center;gap:4px;width:210px;margin-top:10px;height:16px;color:#555}
      .st b{flex:1;height:1px;background:#d4d7da}
      .st b:first-child{flex:none;width:84px}
      .done{margin:0 0 0 3px;line-height:16px}
      .status{height:20px;flex:none;box-sizing:border-box;background:#fff;border:1px solid #c4c8cc;border-top:0;margin:0 4px 0 2px;width:348px}
      .foot{flex:1;display:flex;align-items:center;padding:0 4px 0 11px;gap:4px}
      .btn{width:47px;height:28px;box-sizing:border-box;border-radius:3px;border:1px solid #c8ccd0;background:linear-gradient(#fbfbfb,#e4e6e8);display:flex;align-items:center;justify-content:center}
      .btn.ok{background:linear-gradient(#cfeafb,#84c8f2);border-color:#a8d4ee;margin-left:auto;margin-right:-1px}
    </style>
    <div class="tt">元件放置</div>
    <div class="tabs"><div class="tab">放置</div><div class="tab off">属性</div></div>
    <div class="panel">
      <div class="tree">
        <div class="t1"><cad-icon name="minus" size="9"></cad-icon>集3（用户定义）</div>
        <div class="sel">
          <div class="hd"><cad-icon name="arrow" size="12"></cad-icon>重合</div>
          <div class="ref"><cad-icon name="blockred" size="19"></cad-icon><div>曲面:<span>F5</span></div></div>
          <div class="ref"><cad-icon name="blockgrey" size="19"></cad-icon><div>曲面:<span>F5</span></div></div>
        </div>
        <div class="opts">重合<br>平行<br>新建约束</div>
      </div>
      <div class="side">
        <div class="chk"><span class="box"><cad-icon name="check" size="14"></cad-icon></span>约束已启用</div>
        <div class="lab">约束类型</div>
        <div class="dd"><cad-icon name="coincide" size="20"></cad-icon>重合<em><i></i></em></div>
        <div class="lab" style="margin-top:11px">偏移</div>
        <div class="num"><div class="inp">0.00<em><i></i></em></div><div class="rv">反向</div></div>
        <div class="st"><b></b>状况<b></b></div>
        <div class="done">完全约束</div>
      </div>
    </div>
    <div class="status"></div>
    <div class="foot"><span class="box" style="width:15px;height:15px"><cad-icon name="check" size="14"></cad-icon></span><cad-icon name="glasses" size="20"></cad-icon>
      <div class="btn ok"><cad-icon name="tick" size="18"></cad-icon></div><div class="btn"><cad-icon name="cross" size="16"></cad-icon></div></div>`);
  }
}
customElements.define('placement-dialog', PlacementDialog);

class ChatWindow extends HTMLElement {
  connectedCallback() {
    shadow(this, `<style>
      :host{position:absolute;left:1068px;top:0;width:90px;height:448px;box-sizing:border-box;border-left:1px solid #3c4c5c;border-bottom:1px solid #3c4c5c;border-bottom-left-radius:6px;overflow:hidden;display:flex;flex-direction:column;font-size:12px;color:#222;background:#e6edf5}
      .top{flex:1;background:linear-gradient(#dfe8f2,#edf2f8);display:flex;flex-direction:column}
      .cam{display:flex;align-items:center;height:20px;margin-top:-4px;padding-left:14px;gap:8px}
      i{width:0;height:0;border:3.5px solid transparent;border-top:4px solid #345;border-bottom:0}
      .n{display:flex;align-items:center;white-space:nowrap;height:16px}
      .bar{height:28px;flex:none;background:#d8e2ed;display:flex;align-items:center;padding-left:5px;gap:8px}
      .w{height:95px;flex:none;background:#fff}
      .f{height:31px;flex:none;background:#d4deea;padding-left:9px;line-height:33px;white-space:nowrap}
    </style>
    <div class="top">
      <div class="cam"><cad-icon name="cam" size="24"></cad-icon><i></i></div>
      <div class="n" style="margin:9px 0 0 9px;gap:3px"><cad-icon name="info" size="14"></cad-icon>对方"离开</div>
      <div class="n" style="margin:5px 0 0 8px;gap:0"><cad-icon name="shield" size="15"></cad-icon>交谈中请</div>
    </div>
    <div class="bar"><cad-icon name="bold_a" size="20"></cad-icon><cad-icon name="smile" size="18"></cad-icon><cad-icon name="smile2" size="18"></cad-icon></div>
    <div class="w"></div>
    <div class="f">还房贷100%</div>`);
  }
}
customElements.define('chat-window', ChatWindow);
</script>
</body>
</html>
